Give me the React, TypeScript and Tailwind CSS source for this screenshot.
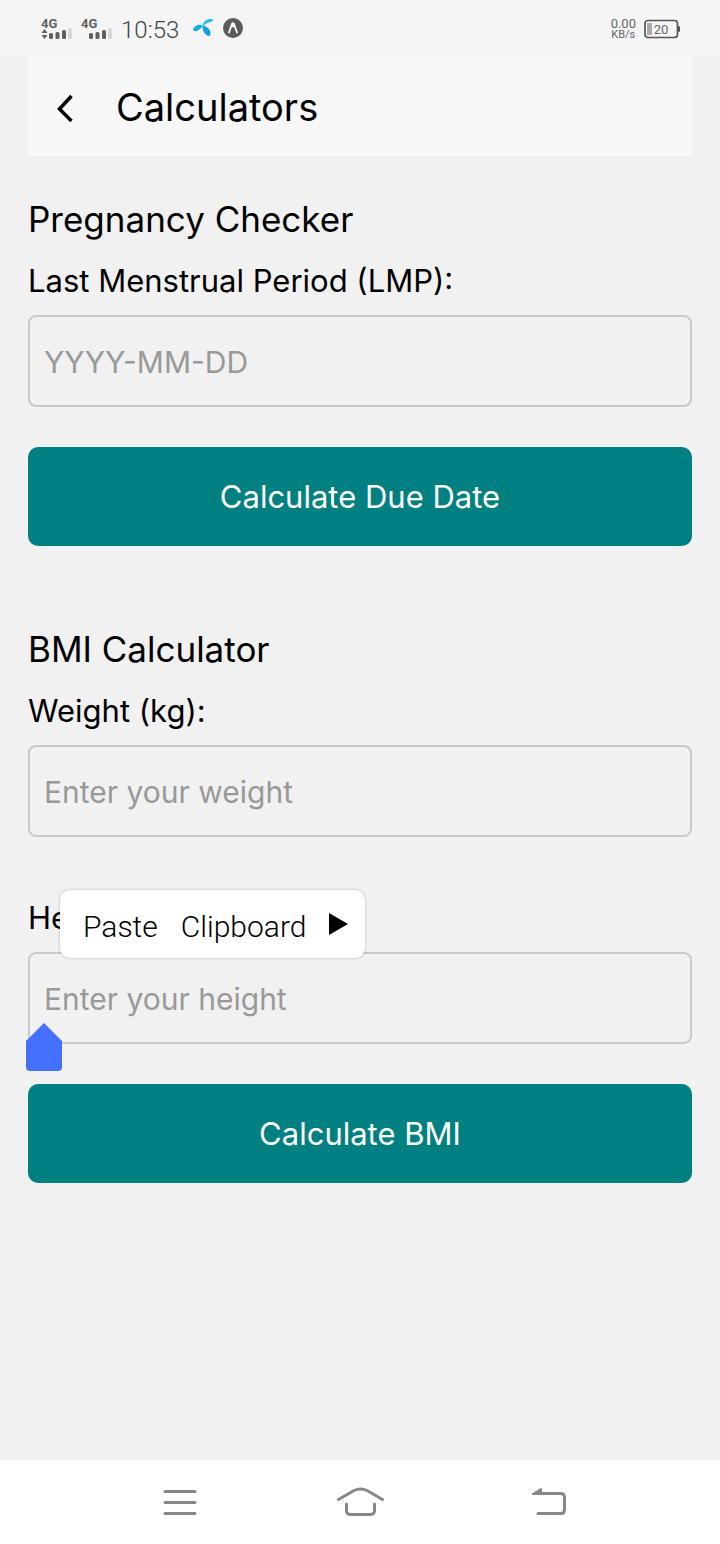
import type { ReactNode } from "react";

function SignalIcon({ data }: { data?: boolean }) {
  return (
    <svg width="32" height="26" viewBox="0 0 32 26" aria-hidden="true">
      <text x="0" y="13" fontSize="13" fontWeight="700" fill="#5f5f5f" fontFamily="Roboto, sans-serif">
        4G
      </text>
      {data && <path d="M0.500 18l3-4 3 4zM0.500 20h6l-3 4z" fill="#5f5f5f" />}
      <rect x="8" y="18" width="4" height="6" rx="1.500" fill="#5f5f5f" />
      <rect x="14.500" y="17" width="4" height="7" rx="1.500" fill="#5f5f5f" />
      <rect x="21" y="15" width="4" height="9" rx="1.500" fill="#5f5f5f" />
      <rect x="27" y="13" width="4" height="11" rx="1.500" fill="#d9d9d9" />
    </svg>
  );
}

function StatusBar() {
  return (
    <header className="flex h-14 items-center justify-between bg-[#f5f5f5] pr-10 pl-[41px] font-[Roboto,sans-serif] text-[#666]">
      <div className="flex items-center">
        <SignalIcon data />
        <span className="ml-2 flex">
          <SignalIcon />
        </span>
        <time className="ml-2 pt-1 text-[24px] leading-8 font-light text-[#444]">10:53</time>
        <svg className="ml-3" width="24" height="22" viewBox="0 0 24 22" aria-hidden="true">
          <path d="M12 9C8 6 3 9 2 12.500c1 2.500 3.500 2 5.500 0.500 2-1 3-2.500 4.500-4z" fill="#18aee5" />
          <path d="M11.500 9C12 4 17 1 22 2.500c0 2-2 2.500-4 3-3 0.500-3 2.500-6.500 3.500z" fill="#2bb8ea" />
          <path d="M11.500 8.500c4 0.500 8.500 4 8 9-0.500 2-2 1.500-3.500 1-3-1.500-4.500-5-4.500-10z" fill="#0fa0de" />
        </svg>
        <svg className="ml-2" width="20" height="22" viewBox="0 0 20 22" aria-hidden="true">
          <circle cx="10" cy="11" r="10" fill="#5b5b5b" />
          <path d="M6 15.500l3-8.500q1-1.500 2 0l3 8.500M9 9.500q1-1.500 2 0" stroke="#fff" strokeWidth="1.800" fill="none" strokeLinecap="round" />
        </svg>
      </div>
      <div className="flex items-center gap-2 pt-0.5">
        <div className="text-center text-[#666]">
          <div className="text-[13px] leading-[11px]">0.00</div>
          <div className="text-[11px] leading-[11px]">KB/s</div>
        </div>
        <svg width="36" height="20" viewBox="0 0 36 20" role="img" aria-label="Battery 20 percent">
          <rect x="1" y="1.500" width="32.500" height="17" rx="3" fill="none" stroke="#555" strokeWidth="1.700" />
          <rect x="3" y="4" width="5" height="12" fill="#aaa" />
          <rect x="34" y="7" width="2" height="6" rx="1" fill="#555" />
          <text x="17" y="15" textAnchor="middle" fontSize="13" fill="#666" fontFamily="Roboto, sans-serif">
            20
          </text>
        </svg>
      </div>
    </header>
  );
}

function Field({
  id,
  label,
  placeholder,
  children,
}: {
  id: string;
  label: string;
  placeholder: string;
  children?: ReactNode;
}) {
  return (
    <div className="relative flex flex-col gap-4">
      <label htmlFor={id} className="text-[31px] leading-9">
        {label}
      </label>
      <input
        id={id}
        type="text"
        placeholder={placeholder}
        className="h-[92px] w-full rounded-lg border-2 border-[#c9c9c9] bg-transparent px-3.5 pt-0.5 text-[30px] placeholder:text-[#999] focus:outline-none"
      />
      {children}
    </div>
  );
}

function ActionButton({ children }: { children: ReactNode }) {
  return (
    <button type="button" className="mt-10 h-[99px] w-full rounded-[10px] bg-[#008080] pt-0.5 text-[31px] text-white">
      {children}
    </button>
  );
}

function PasteMenu() {
  return (
    <div className="absolute -top-2.5 left-8 flex h-[68px] items-center gap-[23px] rounded-[10px] bg-white pr-4 pl-[23px] font-[Roboto,sans-serif] text-[30px] font-light shadow-[0_0_3px_rgba(0,0,0,0.25)]">
      <button type="button" className="pt-1">Paste</button>
      <button type="button" className="pt-1">Clipboard</button>
      <button type="button" aria-label="More">
        <svg width="20" height="22" viewBox="0 0 20 22" aria-hidden="true">
          <path d="M0 0v22l19-11z" />
        </svg>
      </button>
    </div>
  );
}

function CursorHandle() {
  return (
    <svg className="absolute top-[123px] -left-0.5" width="36" height="48" viewBox="0 0 36 48" aria-hidden="true">
      <path d="M18 0l18 18v26q0 4-4 4H4q-4 0-4-4V18z" fill="#456fff" />
    </svg>
  );
}

function NavBar() {
  const stroke = { fill: "none", stroke: "#888", strokeWidth: 3, strokeLinecap: "round" as const };
  return (
    <nav className="flex h-[84px] items-center justify-center gap-[132px] bg-white pl-3">
      <button type="button" aria-label="Recent apps">
        <svg width="48" height="32" viewBox="0 0 48 32">
          <path d="M9 5.500h30M9 16.500h30M9 27.500h30" {...stroke} />
        </svg>
      </button>
      <button type="button" aria-label="Home">
        <svg width="48" height="32" viewBox="0 0 48 32">
          <path d="M2.500 13.500L18 4.500q6.500-3 13 0l15.500 9M10.500 18v6.500q0 4 4 4H34q4.500 0 4.500-4V18" {...stroke} />
        </svg>
      </button>
      <button type="button" aria-label="Back" className="ml-3">
        <svg width="48" height="32" viewBox="0 0 48 32">
          <path d="M12 7.500h21q3.500 0 3.500 4v12q0 4-3.500 4H10" {...stroke} />
          <path d="M4 9V7.500L13 2q1 0 1 1V9z" fill="#888" />
        </svg>
      </button>
    </nav>
  );
}

export default function App() {
  return (
    <div className="flex min-h-screen flex-col bg-[#f1f1f1] font-[Inter,sans-serif] text-black">
      <StatusBar />
      <main className="flex-1 px-7">
        <div className="flex h-[100px] items-center gap-10 bg-[#f7f7f7] pt-0.5 pl-6">
          <button type="button" aria-label="Go back">
            <svg width="24" height="32" viewBox="0 0 24 32" fill="none" stroke="#000" strokeWidth="3.500">
              <path d="M19.500 5L7.500 18l12 12" />
            </svg>
          </button>
          <h1 className="text-[38px] leading-[44px]">Calculators</h1>
        </div>
        <section className="pt-[43px]">
          <h2 className="mb-6 text-[35px] leading-10">Pregnancy Checker</h2>
          <Field id="lmp" label="Last Menstrual Period (LMP):" placeholder="YYYY-MM-DD" />
          <ActionButton>Calculate Due Date</ActionButton>
        </section>
        <section className="pt-[83px]">
          <h2 className="mb-6 text-[35px] leading-10">BMI Calculator</h2>
          <div className="flex flex-col gap-[63px]">
            <Field id="weight" label="Weight (kg):" placeholder="Enter your weight" />
            <Field id="height" label="Height (cm):" placeholder="Enter your height">
              <PasteMenu />
              <CursorHandle />
            </Field>
          </div>
          <ActionButton>Calculate BMI</ActionButton>
        </section>
      </main>
      <NavBar />
    </div>
  );
}
